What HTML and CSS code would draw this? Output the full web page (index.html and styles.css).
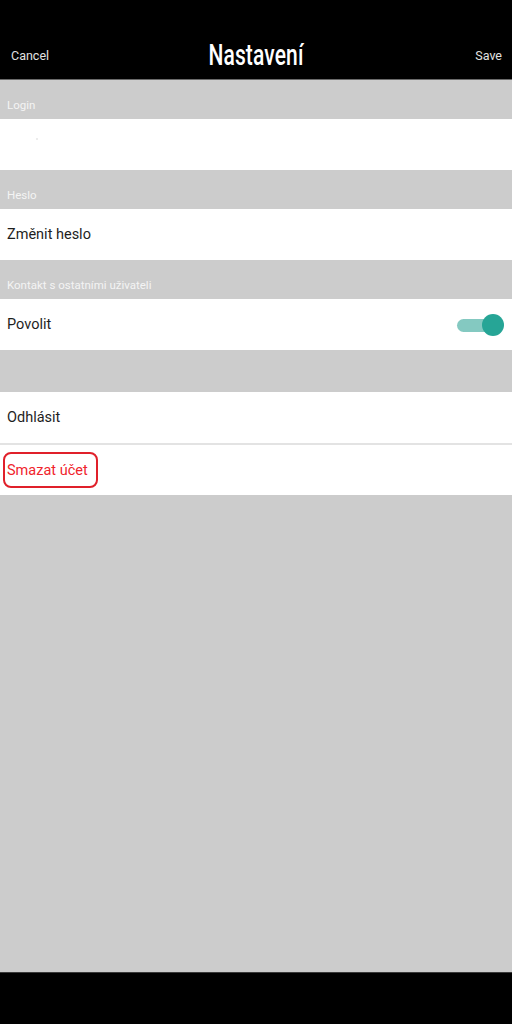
FILE: index.html
```html
<!DOCTYPE html>
<html lang="cs">
<head>
<meta charset="utf-8">
<link rel="stylesheet" href="styles.css">
</head>
<body>
<div class="screen">
  <header class="topbar">
    <span class="nav-btn left">Cancel</span>
    <h1 class="title"><span>Nastavení</span></h1>
    <span class="nav-btn right">Save</span>
  </header>
  <main class="content">
    <div class="section-label">Login</div>
    <div class="row"><span class="blank-dot"></span></div>
    <div class="section-label">Heslo</div>
    <div class="row">Změnit heslo</div>
    <div class="section-label">Kontakt s ostatními uživateli</div>
    <div class="row row-toggle">
      <span>Povolit</span>
      <span class="toggle"><span class="track"></span><span class="thumb"></span></span>
    </div>
    <div class="spacer"></div>
    <div class="row row-sep">Odhlásit</div>
    <div class="row row-last"><span class="danger">Smazat účet</span></div>
  </main>
  <footer class="bottombar"></footer>
</div>
</body>
</html>
```
FILE: styles.css
```css
html, body {
  margin: 0;
  padding: 0;
}
body {
  font-family: Roboto, "Noto Sans", "Liberation Sans", sans-serif;
  background: #cccccc;
}
.screen {
  width: 512px;
  height: 1024px;
  display: flex;
  flex-direction: column;
}
.topbar {
  height: 79px;
  background: #000;
  border-bottom: 1px solid #6a6a6a;
  display: grid;
  grid-template-columns: 1fr auto 1fr;
  align-items: center;
}
.nav-btn {
  color: #e2e2e2;
  font-size: 12.5px;
  margin-top: 32px;
}
.nav-btn.left { padding-left: 11px; }
.nav-btn.right { text-align: right; padding-right: 10px; }
.title {
  margin: 30px 0 0 0;
  font-weight: 500;
  font-size: 30px;
  color: #fff;
  line-height: 1;
}
.title span {
  display: inline-block;
  transform: scaleX(0.7);
  letter-spacing: 0.2px;
}
.content {
  flex: 1;
  background: #cccccc;
  display: flex;
  flex-direction: column;
}
.section-label {
  height: 39px;
  box-sizing: border-box;
  padding: 18px 0 0 7px;
  color: #f4f4f4;
  font-size: 11.5px;
}
.row {
  height: 51px;
  background: #fff;
  display: flex;
  align-items: center;
  padding-left: 7px;
  color: #1e1e1e;
  font-size: 14.5px;
  box-sizing: border-box;
}
.blank-dot {
  width: 2px;
  height: 2px;
  margin-left: 29px;
  margin-top: -12px;
  background: #e6e6e6;
  border-radius: 1px;
}
.row-toggle {
  justify-content: space-between;
  padding-right: 8px;
}
.toggle {
  position: relative;
  width: 48px;
  height: 22px;
}
.track {
  position: absolute;
  left: 1px;
  top: 5px;
  width: 34px;
  height: 13px;
  border-radius: 7px;
  background: #84c9c1;
}
.thumb {
  position: absolute;
  right: 0;
  top: 0;
  width: 22px;
  height: 22px;
  border-radius: 50%;
  background: #26a596;
}
.spacer {
  height: 42px;
}
.row-sep {
  border-bottom: 2px solid #e3e3e3;
  height: 53px;
}
.row-last {
  height: 50px;
  padding-left: 3px;
}
.danger {
  display: inline-flex;
  align-items: center;
  height: 36px;
  box-sizing: border-box;
  padding: 0 8px 0 2px;
  border: 2px solid #e0202a;
  border-radius: 8px;
  color: #f0242c;
  font-size: 14.5px;
}
.bottombar {
  height: 51px;
  background: #000;
  border-top: 1px solid #3a3a3a;
}
```
